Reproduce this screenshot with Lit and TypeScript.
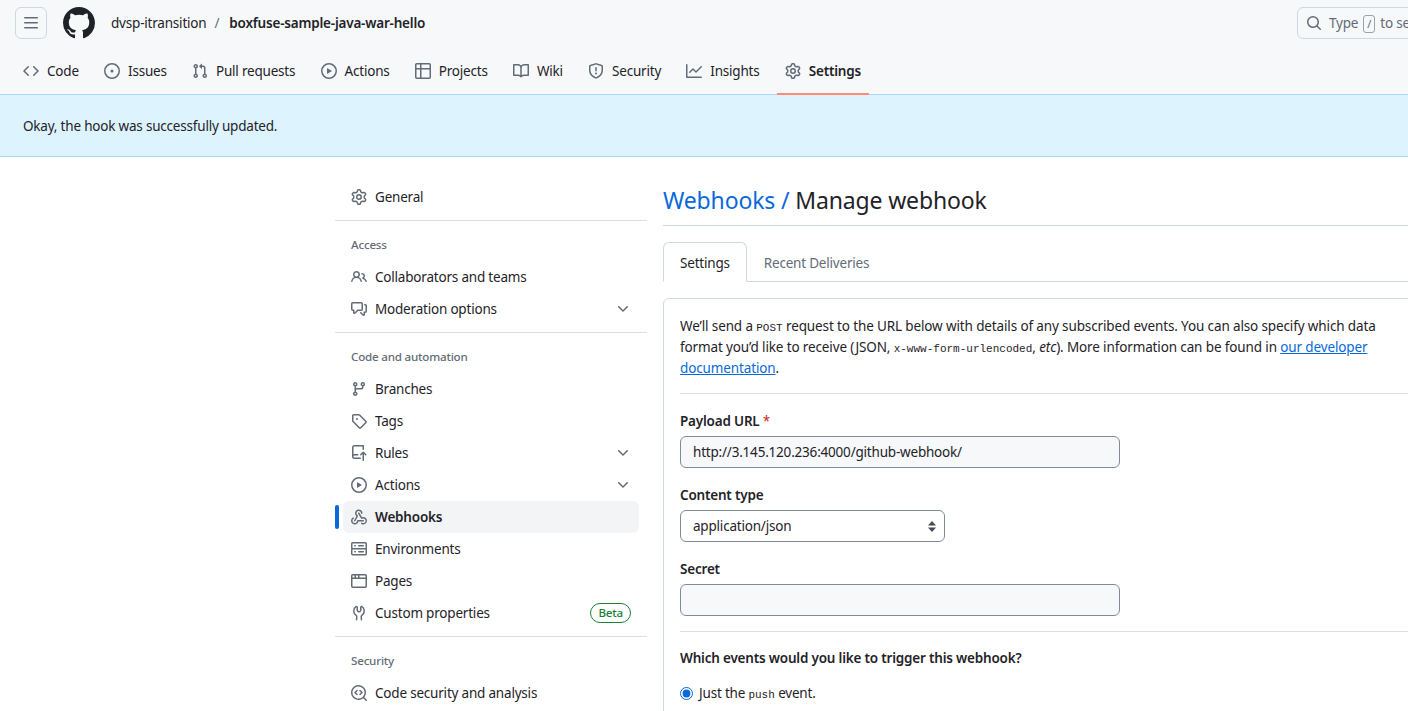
import { LitElement, html, css } from 'lit';
import { customElement } from 'lit/decorators.js';

// octicons, 16px grid
const icons: Record<string, string> = {
  bars: 'M1 2.75A.75.75 0 0 1 1.75 2h12.5a.75.75 0 0 1 0 1.5H1.75A.75.75 0 0 1 1 2.75Zm0 5A.75.75 0 0 1 1.75 7h12.5a.75.75 0 0 1 0 1.5H1.75A.75.75 0 0 1 1 7.75ZM1.75 12h12.5a.75.75 0 0 1 0 1.5H1.75a.75.75 0 0 1 0-1.5Z',
  github: 'M8 0c4.42 0 8 3.58 8 8a8.013 8.013 0 0 1-5.45 7.59c-.4.08-.55-.17-.55-.38 0-.27.01-1.13.01-2.2 0-.75-.25-1.23-.54-1.48 1.78-.2 3.65-.88 3.65-3.95 0-.88-.31-1.59-.82-2.15.08-.2.36-1.02-.08-2.12 0 0-.67-.22-2.2.82-.64-.18-1.32-.27-2-.27-.68 0-1.36.09-2 .27-1.53-1.03-2.2-.82-2.2-.82-.44 1.1-.16 1.92-.08 2.12-.51.56-.82 1.28-.82 2.15 0 3.06 1.86 3.75 3.64 3.95-.23.2-.44.55-.51 1.07-.46.21-1.61.55-2.33-.66-.15-.24-.6-.83-1.23-.82-.67.01-.27.38.01.53.34.19.73.9.82 1.13.16.45.68 1.31 2.69.94 0 .67.01 1.3.01 1.49 0 .21-.15.45-.55.38A7.995 7.995 0 0 1 0 8c0-4.42 3.58-8 8-8Z',
  code: 'm11.28 3.22 4.25 4.25a.75.75 0 0 1 0 1.06l-4.25 4.25a.749.749 0 0 1-1.275-.326.749.749 0 0 1 .215-.734L13.94 8l-3.72-3.72a.749.749 0 0 1 .326-1.275.749.749 0 0 1 .734.215Zm-6.56 0a.751.751 0 0 1 1.042.018.751.751 0 0 1 .018 1.042L2.06 8l3.72 3.72a.749.749 0 0 1-.326 1.275.749.749 0 0 1-.734-.215L.47 8.53a.75.75 0 0 1 0-1.06Z',
  issue: 'M8 9.5a1.5 1.5 0 1 0 0-3 1.5 1.5 0 0 0 0 3Z M8 0a8 8 0 1 1 0 16A8 8 0 0 1 8 0ZM1.5 8a6.5 6.5 0 1 0 13 0 6.5 6.5 0 0 0-13 0Z',
  pull: 'M1.5 3.25a2.25 2.25 0 1 1 3 2.122v5.256a2.251 2.251 0 1 1-1.5 0V5.372A2.25 2.25 0 0 1 1.5 3.25Zm5.677-.177L9.573.677A.25.25 0 0 1 10 .854V2.5h1A2.5 2.5 0 0 1 13.5 5v5.628a2.251 2.251 0 1 1-1.5 0V5a1 1 0 0 0-1-1h-1v1.646a.25.25 0 0 1-.427.177L7.177 3.427a.25.25 0 0 1 0-.354ZM3.75 2.5a.75.75 0 1 0 0 1.5.75.75 0 0 0 0-1.5Zm0 9.5a.75.75 0 1 0 0 1.5.75.75 0 0 0 0-1.5Zm8.25.75a.75.75 0 1 0 1.5 0 .75.75 0 0 0-1.5 0Z',
  play: 'M8 0a8 8 0 1 1 0 16A8 8 0 0 1 8 0ZM1.5 8a6.5 6.5 0 1 0 13 0 6.5 6.5 0 0 0-13 0Zm4.879-2.773 4.264 2.559a.25.25 0 0 1 0 .428l-4.264 2.559A.25.25 0 0 1 6 10.559V5.442a.25.25 0 0 1 .379-.215Z',
  table: 'M0 1.75C0 .784.784 0 1.75 0h12.5C15.216 0 16 .784 16 1.75v12.5A1.75 1.75 0 0 1 14.25 16H1.75A1.75 1.75 0 0 1 0 14.25ZM6.5 6.5v8h7.75a.25.25 0 0 0 .25-.25V6.5Zm8-1.5V1.75a.25.25 0 0 0-.25-.25H6.5V5Zm-13 1.5v7.75c0 .138.112.25.25.25H5v-8ZM5 5V1.5H1.75a.25.25 0 0 0-.25.25V5Z',
  book: 'M0 1.75A.75.75 0 0 1 .75 1h4.253c1.227 0 2.317.59 3 1.501A3.743 3.743 0 0 1 11.006 1h4.245a.75.75 0 0 1 .75.75v10.5a.75.75 0 0 1-.75.75h-4.507a2.25 2.25 0 0 0-1.591.659l-.622.621a.75.75 0 0 1-1.06 0l-.622-.621A2.25 2.25 0 0 0 5.258 13H.75a.75.75 0 0 1-.75-.75Zm7.251 10.324.004-5.073-.002-2.253A2.25 2.25 0 0 0 5.003 2.5H1.5v9h3.757a3.75 3.75 0 0 1 1.994.574ZM8.755 4.75l-.004 7.322a3.752 3.752 0 0 1 1.992-.572H14.5v-9h-3.495a2.25 2.25 0 0 0-2.25 2.25Z',
  shield: 'M7.467.133a1.748 1.748 0 0 1 1.066 0l5.25 1.68A1.75 1.75 0 0 1 15 3.48V7c0 1.566-.32 3.182-1.303 4.682-.983 1.498-2.585 2.813-5.032 3.855a1.697 1.697 0 0 1-1.33 0c-2.447-1.042-4.049-2.357-5.032-3.855C1.32 10.182 1 8.566 1 7V3.48a1.75 1.75 0 0 1 1.217-1.667Zm.61 1.429a.25.25 0 0 0-.153 0l-5.25 1.68a.25.25 0 0 0-.174.238V7c0 1.358.275 2.666 1.057 3.86.784 1.194 2.121 2.34 4.366 3.297a.196.196 0 0 0 .154 0c2.245-.956 3.582-2.104 4.366-3.298C13.225 9.666 13.5 8.36 13.5 7V3.48a.251.251 0 0 0-.174-.237l-5.25-1.68ZM8.75 4.75v3a.75.75 0 0 1-1.5 0v-3a.75.75 0 0 1 1.5 0ZM9 10.5a1 1 0 1 1-2 0 1 1 0 0 1 2 0Z',
  graph: 'M1.5 1.75V13.5h13.75a.75.75 0 0 1 0 1.5H.75a.75.75 0 0 1-.75-.75V1.75a.75.75 0 0 1 1.5 0Zm14.28 2.53-5.25 5.25a.75.75 0 0 1-1.06 0L7 7.06 4.28 9.78a.751.751 0 0 1-1.042-.018.751.751 0 0 1-.018-1.042l3.25-3.25a.75.75 0 0 1 1.06 0L10 7.94l4.72-4.72a.751.751 0 0 1 1.042.018.751.751 0 0 1 .018 1.042Z',
  gear: 'M8 0a8.2 8.2 0 0 1 .701.031C9.444.095 9.99.645 10.16 1.29l.288 1.107c.018.066.079.158.212.224.231.114.454.243.668.386.123.082.233.09.299.071l1.103-.303c.644-.176 1.392.021 1.82.63.27.385.506.792.704 1.218.315.675.111 1.422-.364 1.891l-.814.806c-.049.048-.098.147-.088.294.016.257.016.515 0 .772-.01.147.038.246.088.294l.814.806c.475.469.679 1.216.364 1.891a7.977 7.977 0 0 1-.704 1.217c-.428.61-1.176.807-1.82.63l-1.102-.302c-.067-.019-.177-.011-.3.071a5.909 5.909 0 0 1-.668.386c-.133.066-.194.158-.211.224l-.29 1.106c-.168.646-.715 1.196-1.458 1.26a8.006 8.006 0 0 1-1.402 0c-.743-.064-1.289-.614-1.458-1.26l-.289-1.106c-.018-.066-.079-.158-.212-.224a5.738 5.738 0 0 1-.668-.386c-.123-.082-.233-.09-.299-.071l-1.103.303c-.644.176-1.392-.021-1.82-.63a8.12 8.12 0 0 1-.704-1.218c-.315-.675-.111-1.422.363-1.891l.815-.806c.05-.048.098-.147.088-.294a6.214 6.214 0 0 1 0-.772c.01-.147-.038-.246-.088-.294l-.815-.806C.635 6.045.431 5.298.746 4.623a7.92 7.92 0 0 1 .704-1.217c.428-.61 1.176-.807 1.82-.63l1.102.302c.067.019.177.011.3-.071.214-.143.437-.272.668-.386.133-.066.194-.158.211-.224l.29-1.106C6.009.645 6.556.095 7.299.03 7.53.01 7.764 0 8 0Zm-.571 1.525c-.036.003-.108.036-.137.146l-.289 1.105c-.147.561-.549.967-.998 1.189-.173.086-.34.183-.5.29-.417.278-.97.423-1.529.27l-1.103-.303c-.109-.03-.175.016-.195.045-.22.312-.412.644-.573.99-.014.031-.021.11.059.19l.815.806c.411.406.562.957.53 1.456a4.709 4.709 0 0 0 0 .582c.032.499-.119 1.05-.53 1.456l-.815.806c-.081.08-.073.159-.059.19.162.346.353.677.573.989.02.03.085.076.195.046l1.102-.303c.56-.153 1.113-.008 1.53.27.161.107.328.204.501.29.447.222.85.629.997 1.189l.289 1.105c.029.109.101.143.137.146a6.6 6.6 0 0 0 1.142 0c.036-.003.108-.036.137-.146l.289-1.105c.147-.561.549-.967.998-1.189.173-.086.34-.183.5-.29.417-.278.97-.423 1.529-.27l1.103.303c.109.029.175-.016.195-.045.22-.313.411-.644.573-.99.014-.031.021-.11-.059-.19l-.815-.806c-.411-.406-.562-.957-.53-1.456a4.709 4.709 0 0 0 0-.582c-.032-.499.119-1.05.53-1.456l.815-.806c.081-.08.073-.159.059-.19a6.464 6.464 0 0 0-.573-.989c-.02-.03-.085-.076-.195-.046l-1.102.303c-.56.153-1.113.008-1.53-.27a4.44 4.44 0 0 0-.501-.29c-.447-.222-.85-.629-.997-1.189l-.289-1.105c-.029-.11-.101-.143-.137-.146a6.6 6.6 0 0 0-1.142 0ZM11 8a3 3 0 1 1-6 0 3 3 0 0 1 6 0ZM9.5 8a1.5 1.5 0 1 0-3.001.001A1.5 1.5 0 0 0 9.5 8Z',
  search: 'M10.68 11.74a6 6 0 0 1-7.922-8.982 6 6 0 0 1 8.982 7.922l3.04 3.04a.749.749 0 0 1-.326 1.275.749.749 0 0 1-.734-.215ZM11.5 7a4.499 4.499 0 1 0-8.997 0A4.499 4.499 0 0 0 11.5 7Z',
  people: 'M2 5.5a3.5 3.5 0 1 1 5.898 2.549 5.508 5.508 0 0 1 3.034 4.084.75.75 0 1 1-1.482.235 4 4 0 0 0-7.9 0 .75.75 0 0 1-1.482-.236A5.507 5.507 0 0 1 3.102 8.05 3.493 3.493 0 0 1 2 5.5ZM11 4a3.001 3.001 0 0 1 2.22 5.018 5.01 5.01 0 0 1 2.56 3.012.749.749 0 0 1-.885.954.752.752 0 0 1-.549-.514 3.507 3.507 0 0 0-2.522-2.372.75.75 0 0 1-.574-.73v-.352a.75.75 0 0 1 .416-.672A1.5 1.5 0 0 0 11 5.5.75.75 0 0 1 11 4Zm-5.5-.5a2 2 0 1 0-.001 3.999A2 2 0 0 0 5.5 3.5Z',
  comments: 'M1.75 1h8.5c.966 0 1.75.784 1.75 1.75v5.5A1.75 1.75 0 0 1 10.25 10H7.061l-2.574 2.573A1.458 1.458 0 0 1 2 11.543V10h-.25A1.75 1.75 0 0 1 0 8.25v-5.5C0 1.784.784 1 1.75 1ZM1.5 2.75v5.5c0 .138.112.25.25.25h1a.75.75 0 0 1 .75.75v2.19l2.72-2.72a.749.749 0 0 1 .53-.22h3.5a.25.25 0 0 0 .25-.25v-5.5a.25.25 0 0 0-.25-.25h-8.5a.25.25 0 0 0-.25.25Zm13 2a.25.25 0 0 0-.25-.25h-.5a.75.75 0 0 1 0-1.5h.5c.966 0 1.75.784 1.75 1.75v5.5A1.75 1.75 0 0 1 14.25 12H14v1.543a1.458 1.458 0 0 1-2.487 1.03L9.22 12.28a.749.749 0 0 1 .326-1.275.749.749 0 0 1 .734.215l2.22 2.22v-2.19a.75.75 0 0 1 .75-.75h1a.25.25 0 0 0 .25-.25Z',
  chevron: 'M12.78 5.22a.749.749 0 0 1 0 1.06l-4.25 4.25a.749.749 0 0 1-1.06 0L3.22 6.28a.749.749 0 1 1 1.06-1.06L8 8.939l3.72-3.719a.749.749 0 0 1 1.06 0Z',
  branch: 'M9.5 3.25a2.25 2.25 0 1 1 3 2.122V6A2.5 2.5 0 0 1 10 8.5H6a1 1 0 0 0-1 1v1.128a2.251 2.251 0 1 1-1.5 0V5.372a2.25 2.25 0 1 1 1.5 0v1.836A2.493 2.493 0 0 1 6 7h4a1 1 0 0 0 1-1v-.628A2.25 2.25 0 0 1 9.5 3.25Zm-6 0a.75.75 0 1 0 1.5 0 .75.75 0 0 0-1.5 0Zm8.25-.75a.75.75 0 1 0 0 1.5.75.75 0 0 0 0-1.5ZM4.25 12a.75.75 0 1 0 0 1.5.75.75 0 0 0 0-1.5Z',
  tag: 'M1 7.775V2.75C1 1.784 1.784 1 2.75 1h5.025c.464 0 .91.184 1.238.513l6.25 6.25a1.75 1.75 0 0 1 0 2.474l-5.026 5.026a1.75 1.75 0 0 1-2.474 0l-6.25-6.25A1.752 1.752 0 0 1 1 7.775Zm1.5 0c0 .066.026.13.073.177l6.25 6.25a.25.25 0 0 0 .354 0l5.025-5.025a.25.25 0 0 0 0-.354l-6.25-6.25a.25.25 0 0 0-.177-.073H2.75a.25.25 0 0 0-.25.25ZM6 5a1 1 0 1 1 0 2 1 1 0 0 1 0-2Z',
  repoPush: 'M1 2.5A2.5 2.5 0 0 1 3.5 0h8.75a.75.75 0 0 1 .75.75v3.5a.75.75 0 0 1-1.5 0V1.5h-8a1 1 0 0 0-1 1v6.708A2.493 2.493 0 0 1 3.5 9h3.25a.75.75 0 0 1 0 1.5H3.5a1 1 0 0 0 0 2h5.75a.75.75 0 0 1 0 1.5H3.5A2.5 2.5 0 0 1 1 11.5Zm13.23 7.79h-.001l-1.224-1.224v6.184a.75.75 0 0 1-1.5 0V9.066L10.28 10.29a.75.75 0 0 1-1.06-1.061l2.505-2.504a.75.75 0 0 1 1.06 0L15.29 9.23a.751.751 0 0 1-.018 1.042.751.751 0 0 1-1.042.018Z',
  webhook: 'M5.5 4.25a2.25 2.25 0 0 1 4.5 0 .75.75 0 0 0 1.5 0 3.75 3.75 0 1 0-6.14 2.889l-2.272 4.258a.75.75 0 0 0 1.324.706L7 7.25a.75.75 0 0 0-.309-1.015A2.25 2.25 0 0 1 5.5 4.25Z M7.364 3.607a.75.75 0 0 1 1.03.257l2.608 4.349a3.75 3.75 0 1 1-.628 6.785.75.75 0 0 1 .752-1.299 2.25 2.25 0 1 0-.033-3.88.75.75 0 0 1-1.03-.256L7.107 4.636a.75.75 0 0 1 .257-1.03Z M2.9 8.776A.75.75 0 0 1 2.625 9.8 2.25 2.25 0 1 0 6 11.75a.75.75 0 0 1 .75-.751h5.5a.75.75 0 0 1 0 1.5H7.425a3.751 3.751 0 1 1-5.55-3.998.75.75 0 0 1 1.024.274Z',
  server: 'M1.75 1h12.5c.966 0 1.75.784 1.75 1.75v4c0 .372-.116.717-.314 1 .198.283.314.628.314 1v4a1.75 1.75 0 0 1-1.75 1.75H1.75A1.75 1.75 0 0 1 0 12.75v-4c0-.358.109-.707.314-1a1.739 1.739 0 0 1-.314-1v-4C0 1.784.784 1 1.75 1ZM1.5 2.75v4c0 .138.112.25.25.25h12.5a.25.25 0 0 0 .25-.25v-4a.25.25 0 0 0-.25-.25H1.75a.25.25 0 0 0-.25.25Zm.25 5.75a.25.25 0 0 0-.25.25v4c0 .138.112.25.25.25h12.5a.25.25 0 0 0 .25-.25v-4a.25.25 0 0 0-.25-.25ZM7 4.75A.75.75 0 0 1 7.75 4h4.5a.75.75 0 0 1 0 1.5h-4.5A.75.75 0 0 1 7 4.75ZM7.75 10h4.5a.75.75 0 0 1 0 1.5h-4.5a.75.75 0 0 1 0-1.5ZM3 4.75A.75.75 0 0 1 3.75 4h.5a.75.75 0 0 1 0 1.5h-.5A.75.75 0 0 1 3 4.75ZM3.75 10h.5a.75.75 0 0 1 0 1.5h-.5a.75.75 0 0 1 0-1.5Z',
  browser: 'M0 2.75C0 1.784.784 1 1.75 1h12.5c.966 0 1.75.784 1.75 1.75v10.5A1.75 1.75 0 0 1 14.25 15H1.75A1.75 1.75 0 0 1 0 13.25ZM14.5 6h-13v7.25c0 .138.112.25.25.25h12.5a.25.25 0 0 0 .25-.25Zm-6-3.5v2h6V2.75a.25.25 0 0 0-.25-.25ZM5 2.5v2h2v-2Zm-3.25 0a.25.25 0 0 0-.25.25V4.5h2v-2Z',
  tools: 'M5.433 2.304A4.492 4.492 0 0 0 3.5 6c0 1.598.832 3.002 2.09 3.802.518.328.929.923.902 1.64v.008l-.164 3.337a.75.75 0 1 1-1.498-.073l.163-3.33c.002-.085-.05-.216-.207-.316A5.996 5.996 0 0 1 2 6a5.993 5.993 0 0 1 2.567-4.92 1.482 1.482 0 0 1 1.673-.04c.462.296.76.827.76 1.423v2.82c0 .082.041.16.11.206l.75.51a.25.25 0 0 0 .28 0l.75-.51A.249.249 0 0 0 9 5.282V2.463c0-.596.298-1.127.76-1.423a1.482 1.482 0 0 1 1.673.04A5.993 5.993 0 0 1 14 6a5.996 5.996 0 0 1-2.786 5.068c-.157.1-.209.23-.207.315l.163 3.33a.752.752 0 0 1-1.094.714.75.75 0 0 1-.404-.64l-.164-3.345c-.027-.717.384-1.312.902-1.64A4.495 4.495 0 0 0 12.5 6a4.492 4.492 0 0 0-1.933-3.696c-.024.017-.067.067-.067.16v2.818a1.75 1.75 0 0 1-.767 1.448l-.75.51a1.75 1.75 0 0 1-1.966 0l-.75-.51A1.75 1.75 0 0 1 5.5 5.282V2.463c0-.092-.043-.142-.067-.159Z',
  codescan: 'M8.47 4.97a.75.75 0 0 0 0 1.06L9.94 7.5 8.47 8.97a.75.75 0 1 0 1.06 1.06l2-2a.75.75 0 0 0 0-1.06l-2-2a.75.75 0 0 0-1.06 0ZM6.53 6.03a.75.75 0 0 0-1.06-1.06l-2 2a.75.75 0 0 0 0 1.06l2 2a.75.75 0 1 0 1.06-1.06L5.06 7.5l1.47-1.47Z M12.246 13.307a7.501 7.501 0 1 1 1.06-1.06l2.474 2.473a.749.749 0 0 1-.326 1.275.749.749 0 0 1-.734-.215ZM1.5 7.5a6.002 6.002 0 0 0 3.608 5.504 6.002 6.002 0 0 0 6.486-1.117.748.748 0 0 1 .292-.293A6 6 0 1 0 1.5 7.5Z',
};

const icon = (name: string, size = 16) =>
  html`<svg class="icon" width=${size} height=${size} viewBox="0 0 16 16" fill="currentColor"><path d=${icons[name]}></path></svg>`;

const repoTabs = [
  ['code', 'Code'],
  ['issue', 'Issues'],
  ['pull', 'Pull requests'],
  ['play', 'Actions'],
  ['table', 'Projects'],
  ['book', 'Wiki'],
  ['shield', 'Security'],
  ['graph', 'Insights'],
  ['gear', 'Settings'],
];

interface NavItem {
  icon: string;
  label: string;
  chevron?: boolean;
  active?: boolean;
  beta?: boolean;
}

const nav: { title?: string; items: NavItem[] }[] = [
  { items: [{ icon: 'gear', label: 'General' }] },
  {
    title: 'Access',
    items: [
      { icon: 'people', label: 'Collaborators and teams' },
      { icon: 'comments', label: 'Moderation options', chevron: true },
    ],
  },
  {
    title: 'Code and automation',
    items: [
      { icon: 'branch', label: 'Branches' },
      { icon: 'tag', label: 'Tags' },
      { icon: 'repoPush', label: 'Rules', chevron: true },
      { icon: 'play', label: 'Actions', chevron: true },
      { icon: 'webhook', label: 'Webhooks', active: true },
      { icon: 'server', label: 'Environments' },
      { icon: 'browser', label: 'Pages' },
      { icon: 'tools', label: 'Custom properties', beta: true },
    ],
  },
  { title: 'Security', items: [{ icon: 'codescan', label: 'Code security and analysis' }] },
];

@customElement('app-root')
export class AppRoot extends LitElement {
  static styles = css`
    :host {
      display: block;
      height: 711px;
      overflow: hidden;
      background: #fff;
      color: #1f2328;
      font-family: 'Noto Sans', 'Open Sans', sans-serif;
      font-size: 13.5px;
      line-height: 21px;
      letter-spacing: -0.2px;
    }
    * {
      box-sizing: border-box;
    }
    .page {
      width: 1500px;
    }
    .icon {
      display: block;
      flex: none;
      color: #636c76;
    }
    header {
      height: 94px;
      background: #f6f8fa;
      padding: 7px 15px 0;
    }
    .top {
      display: flex;
      align-items: center;
      height: 32px;
      margin-bottom: 8px;
    }
    .burger {
      display: flex;
      align-items: center;
      justify-content: center;
      width: 32px;
      height: 32px;
      border: 1px solid #d0d7de;
      border-radius: 6px;
      margin-right: 16px;
    }
    .logo {
      margin-right: 16px;
    }
    .logo .icon {
      color: #1f2328;
    }
    .crumbs {
      display: flex;
      gap: 8px;
      margin-top: 1px;
    }
    .crumbs .sep {
      color: #636c76;
    }
    .crumbs b {
      margin-left: 2px;
      font-weight: 600;
    }
    .search {
      display: flex;
      align-items: center;
      gap: 7px;
      margin-left: auto;
      width: 188px;
      height: 32px;
      padding-left: 8px;
      border: 1px solid #d0d7de;
      border-radius: 6px;
      color: #636c76;
      white-space: nowrap;
    }
    .search-text {
      display: flex;
      align-items: center;
      gap: 5px;
      padding-top: 1px;
    }
    .search kbd {
      width: 12px;
      height: 18px;
      border: 1px solid #9aa3ad;
      border-radius: 3px;
      font: 11px/16px 'Noto Sans', sans-serif;
      text-align: center;
    }
    .tabs {
      display: flex;
      gap: 9.2px;
      height: 47px;
    }
    .tab {
      position: relative;
      display: flex;
      align-items: center;
      gap: 8px;
      padding: 1px 8px 0;
    }
    .tab.on {
      font-weight: 600;
    }
    .tab.on::after {
      content: '';
      position: absolute;
      left: 0;
      right: 0;
      bottom: -1px;
      height: 2px;
      background: #fd8c73;
    }
    .flash {
      padding: 21px 23px;
      height: 63px;
      background: #ddf4ff;
      border-top: 1px solid #a8d8ff;
      border-bottom: 1px solid #a8d8ff;
    }
    .layout {
      display: flex;
      gap: 16px;
      padding: 24px 0 0 335px;
    }
    aside {
      flex: none;
      width: 312px;
    }
    .divider {
      height: 1px;
      margin: 7px 0;
      background: #d8dee4;
    }
    .heading {
      height: 33px;
      padding: 0 16px;
      font-size: 11.6px;
      font-weight: 500;
      line-height: 33px;
      color: #636c76;
    }
    .item {
      position: relative;
      display: flex;
      align-items: center;
      gap: 8px;
      height: 32px;
      margin: 0 8px;
      padding: 0 8px;
      border-radius: 6px;
    }
    .item.on {
      background: #f3f4f6;
      font-weight: 600;
    }
    .item.on::before {
      content: '';
      position: absolute;
      left: -8px;
      top: 4px;
      width: 4px;
      height: 24px;
      border-radius: 6px;
      background: #0969da;
    }
    .item .right {
      margin-left: auto;
    }
    .beta {
      margin-left: auto;
      height: 20px;
      padding: 0 7px;
      border: 1px solid #1a7f37;
      border-radius: 10px;
      color: #1a7f37;
      font-size: 11.6px;
      font-weight: 500;
      line-height: 18px;
    }
    main {
      flex: none;
      width: 769px;
    }
    h1 {
      height: 45px;
      margin: 0;
      padding: 1px 0 8px;
      border-bottom: 1px solid #d0d7de;
      font-size: 23px;
      font-weight: 400;
      line-height: 36px;
      letter-spacing: -0.15px;
    }
    h1 a {
      color: #0969da;
    }
    .subtabs {
      display: flex;
      height: 40px;
      margin-top: 16px;
      border-bottom: 1px solid #d0d7de;
    }
    .subtab {
      height: 40px;
      padding: 10px 16px;
      color: #636c76;
      border: 1px solid transparent;
    }
    .subtab.on {
      color: #1f2328;
      background: #fff;
      border-color: #d0d7de;
      border-bottom-color: #fff;
      border-radius: 6px 6px 0 0;
    }
    .card {
      margin-top: 16px;
      padding: 16px;
      border: 1px solid #d0d7de;
      border-radius: 6px;
    }
    p {
      margin: 0;
      padding-top: 1px;
      letter-spacing: -0.13px;
    }
    code {
      font-family: 'Liberation Mono', monospace;
      font-size: 11px;
      line-height: 0;
      letter-spacing: 0;
    }
    a {
      color: #0969da;
      text-decoration: none;
    }
    p a {
      text-decoration: underline;
    }
    hr {
      border: 0;
      height: 1px;
      margin: 15px 0;
      background: #d8dee4;
    }
    p + hr {
      margin: 14px 0 16px;
    }
    label {
      display: block;
      padding-top: 1px;
      margin-bottom: 4px;
      font-weight: 600;
    }
    .req {
      color: #cf222e;
      font-weight: 400;
    }
    .field {
      margin-bottom: 16px;
    }
    .field:last-of-type {
      margin-bottom: 0;
    }
    input[type='text'] {
      display: block;
      width: 440px;
      height: 32px;
      padding: 0 12px;
      border: 1px solid #818b98;
      border-radius: 6px;
      background: #f6f8fa;
      color: #1f2328;
      font: inherit;
      letter-spacing: inherit;
      outline: none;
    }
    .select {
      position: relative;
      width: 265px;
    }
    .select select {
      display: block;
      width: 100%;
      height: 32px;
      padding: 0 12px;
      border: 1px solid #818b98;
      border-radius: 6px;
      background: #fff;
      color: #1f2328;
      font: inherit;
      letter-spacing: inherit;
      appearance: none;
    }
    .select svg {
      position: absolute;
      right: 9px;
      top: 11px;
      pointer-events: none;
    }
    h5 {
      margin: 16px 0 14px;
      font-size: 13.5px;
      font-weight: 600;
    }
    .radio {
      display: flex;
      align-items: center;
      gap: 6px;
      padding-top: 0;
      font-weight: 400;
    }
    .radio input {
      width: 13px;
      height: 13px;
      margin: 0;
      accent-color: #0969da;
    }
  `;

  private renderNavItem(item: NavItem) {
    return html`<div class="item ${item.active ? 'on' : ''}">
      ${icon(item.icon)}
      <span>${item.label}</span>
      ${item.chevron ? html`<span class="right">${icon('chevron')}</span>` : ''}
      ${item.beta ? html`<span class="beta">Beta</span>` : ''}
    </div>`;
  }

  render() {
    return html`<div class="page">
      <header>
        <div class="top">
          <div class="burger">${icon('bars')}</div>
          <div class="logo">${icon('github', 32)}</div>
          <div class="crumbs">
            <span>dvsp-itransition</span>
            <span class="sep">/</span>
            <b>boxfuse-sample-java-war-hello</b>
          </div>
          <div class="search">
            ${icon('search')}
            <span class="search-text"><span>Type</span><kbd>/</kbd><span>to search</span></span>
          </div>
        </div>
        <nav class="tabs">
          ${repoTabs.map(
            ([ic, label]) =>
              html`<div class="tab ${label === 'Settings' ? 'on' : ''}">${icon(ic)}<span>${label}</span></div>`,
          )}
        </nav>
      </header>

      <div class="flash">Okay, the hook was successfully updated.</div>

      <div class="layout">
        <aside>
          ${nav.map(
            (group, i) => html`
              ${i > 0 ? html`<div class="divider"></div>` : ''}
              ${group.title ? html`<div class="heading">${group.title}</div>` : ''}
              ${group.items.map((item) => this.renderNavItem(item))}
            `,
          )}
        </aside>

        <main>
          <h1><a href="#">Webhooks /</a> Manage webhook</h1>
          <div class="subtabs">
            <div class="subtab on">Settings</div>
            <div class="subtab">Recent Deliveries</div>
          </div>
          <div class="card">
            <p>
              We’ll send a <code>POST</code> request to the URL below with details of any subscribed events. You can
              also specify which data<br />format you’d like to receive (JSON, <code>x-www-form-urlencoded</code>,
              <em>etc</em>). More information can be found in <a href="#">our developer<br />documentation</a>.
            </p>
            <hr />
            <div class="field">
              <label>Payload URL <span class="req">*</span></label>
              <input type="text" value="http://3.145.120.236:4000/github-webhook/" />
            </div>
            <div class="field">
              <label>Content type</label>
              <div class="select">
                <select><option>application/json</option></select>
                <svg width="8" height="11" viewBox="0 0 8 11" fill="#424a53"><path d="M4 0 8 4.5H0ZM4 11 0 6.5H8Z"></path></svg>
              </div>
            </div>
            <div class="field">
              <label>Secret</label>
              <input type="text" />
            </div>
            <hr />
            <h5>Which events would you like to trigger this webhook?</h5>
            <label class="radio"><input type="radio" name="events" checked /><span>Just the <code>push</code> event.</span></label>
          </div>
        </main>
      </div>
    </div>`;
  }
}
